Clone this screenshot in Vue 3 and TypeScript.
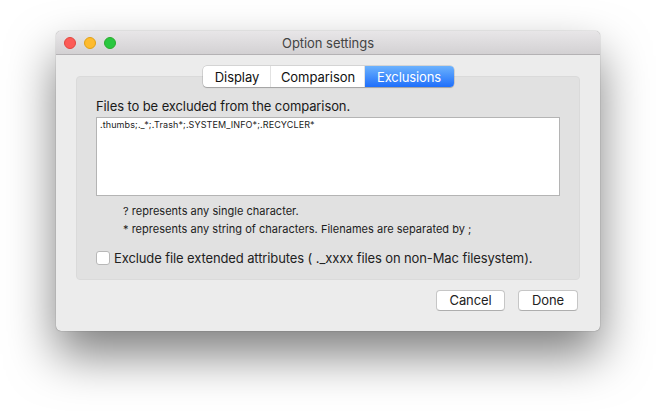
<script setup lang="ts">
const tabs = [
  { label: 'Display', active: false },
  { label: 'Comparison', active: false },
  { label: 'Exclusions', active: true },
]
</script>

<template>
  <div class="stage">
    <div class="window">
      <header class="titlebar">
        <div class="lights">
          <span class="light red"></span>
          <span class="light yellow"></span>
          <span class="light green"></span>
        </div>
        <span class="title">Option settings</span>
      </header>
      <div class="content">
        <section class="panel">
          <nav class="tabs">
            <span v-for="t in tabs" :key="t.label" class="tab" :class="{ active: t.active }">{{ t.label }}</span>
          </nav>
          <p class="heading">Files to be excluded from the comparison.</p>
          <div class="field">.thumbs;._*;.Trash*;.SYSTEM_INFO*;.RECYCLER*</div>
          <div class="hints">
            <p>? represents any single character.</p>
            <p>* represents any string of characters. Filenames are separated by ;</p>
          </div>
          <label class="check">
            <span class="box"></span>
            <span>Exclude file extended attributes ( ._xxxx files on non-Mac filesystem).</span>
          </label>
        </section>
        <footer class="actions">
          <button class="btn cancel">Cancel</button>
          <button class="btn done">Done</button>
        </footer>
      </div>
    </div>
  </div>
</template>

<style>
html, body { margin: 0; background: #fff; overflow: hidden; }
</style>

<style scoped>
.stage {
  width: 656px;
  height: 411px;
  padding: 31px 56px 0;
  box-sizing: border-box;
  font-family: "Inter", "Liberation Sans", sans-serif;
  color: #1c1c1c;
  overflow: hidden;
}
.window {
  width: 544px;
  height: 300px;
  border-radius: 5px;
  background: #ececec;
  box-shadow: 0 24px 48px rgba(0, 0, 0, 0.5), 0 0 1px rgba(0, 0, 0, 0.6);
  display: flex;
  flex-direction: column;
  overflow: hidden;
}
.titlebar {
  height: 22px;
  flex: none;
  background: linear-gradient(#e8e6e8, #d3d1d3);
  border-bottom: 1px solid #b4b2b4;
  position: relative;
  display: flex;
  align-items: center;
  justify-content: center;
  padding-top: 1px;
  box-sizing: content-box;
  margin-bottom: -1px;
}
.lights {
  position: absolute;
  left: 8px;
  top: 6px;
  display: flex;
  gap: 8px;
}
.light {
  width: 12px;
  height: 12px;
  border-radius: 50%;
  box-sizing: border-box;
}
.red { background: #fc5b57; border: 1px solid #e2463f; }
.yellow { background: #febb2e; border: 1px solid #e1a116; }
.green { background: #29c73f; border: 1px solid #2aac2c; }
.title {
  font-size: 13px;
  color: #444;
  letter-spacing: -0.05px;
}
.content {
  flex: 1;
  display: flex;
  flex-direction: column;
  padding: 22px 20px 0;
}
.panel {
  height: 204px;
  box-sizing: border-box;
  background: #e1e1e1;
  border: 1px solid #dadada;
  border-radius: 4px;
  padding: 0 19px;
  position: relative;
  display: flex;
  flex-direction: column;
}
.tabs {
  position: absolute;
  top: -11px;
  left: 126px;
  height: 21px;
  display: flex;
  border-radius: 4px;
  background: #fff;
  box-shadow: 0 0 0 0.5px rgba(0, 0, 0, 0.2), 0 1px 1px rgba(0, 0, 0, 0.2);
  overflow: hidden;
  font-size: 13px;
}
.tab {
  display: flex;
  align-items: center;
  justify-content: center;
  color: #111;
  border-right: 1px solid #e2e2e2;
  box-sizing: border-box;
}
.tab:nth-child(1) { width: 68px; letter-spacing: -0.05px; padding-left: 1px; }
.tab:nth-child(2) { width: 94px; letter-spacing: -0.05px; padding-left: 1px; }
.tab:nth-child(3) { width: 89px; border-right: 0; letter-spacing: -0.12px; padding-right: 1px; }
.tab.active {
  background: linear-gradient(#6cb2fd, #1f6ffb);
  color: #fff;
  font-weight: 400;
}
.heading {
  margin: 20px 0 0;
  font-size: 13px;
  line-height: 18px;
  height: 20px;
  letter-spacing: -0.1px;
  color: #1a1a1a;
}
.field {
  height: 79px;
  box-sizing: border-box;
  background: #fff;
  border: 1px solid #b4b4b4;
  padding: 1px 3px;
  font-size: 9px;
  line-height: 11px;
  letter-spacing: 0.11px;
  color: #222;
}
.hints {
  margin: 7px 0 0 27px;
  font-size: 11px;
  line-height: 17px;
  letter-spacing: 0.02px;
  color: #1c1c1c;
  display: flex;
  flex-direction: column;
  gap: 1px;
}
.hints p { margin: 0; }
.check {
  margin-top: 12px;
  display: flex;
  align-items: center;
  gap: 4px;
  font-size: 13px;
  line-height: 16px;
  letter-spacing: -0.11px;
  color: #222;
}
.box {
  width: 14px;
  height: 14px;
  box-sizing: border-box;
  background: #fff;
  border: 1px solid #b8b8b8;
  border-radius: 3px;
  flex: none;
}
.actions {
  margin-top: 10px;
  display: flex;
  justify-content: flex-end;
  gap: 13px;
  padding-right: 2px;
}
.btn {
  height: 21px;
  padding: 0 0 1px;
  background: #fff;
  border: 1px solid #c6c6c6;
  border-bottom-color: #aeaeae;
  border-radius: 4px;
  font: inherit;
  font-size: 13px;
  letter-spacing: -0.1px;
  color: #222;
  box-sizing: border-box;
}
.cancel { width: 69px; }
.done { width: 60px; }
</style>
